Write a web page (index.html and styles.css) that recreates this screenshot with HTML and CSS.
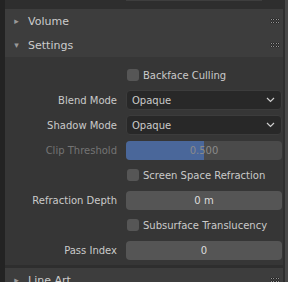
FILE: index.html
```html
<!DOCTYPE html>
<html lang="en">
<head>
  <meta charset="UTF-8" />
  <title>Material Settings</title>
  <link rel="stylesheet" href="styles.css">
</head>
<body>
  <div class="editor">
    <div class="gutter"></div>

    <div class="main">
      <div class="prev"><div class="prev-box"></div></div>

      <section class="panel">
        <div class="panel-header">
          <span class="arrow">&#9656;</span>
          <span class="title">Volume</span>
          <span class="grip"></span>
        </div>
      </section>

      <section class="panel">
        <div class="panel-header">
          <span class="arrow">&#9662;</span>
          <span class="title">Settings</span>
          <span class="grip"></span>
        </div>
        <div class="panel-body">
          <div class="row">
            <span class="label"></span>
            <label class="check"><span class="box"></span>Backface Culling</label>
          </div>
          <div class="row">
            <span class="label">Blend Mode</span>
            <div class="menu">
              <span>Opaque</span>
              <svg width="9" height="6" viewBox="0 0 9 6"><path d="M1 1 L4.5 4.5 L8 1" fill="none" stroke="#cfcfcf" stroke-width="1.2"/></svg>
            </div>
          </div>
          <div class="row">
            <span class="label">Shadow Mode</span>
            <div class="menu">
              <span>Opaque</span>
              <svg width="9" height="6" viewBox="0 0 9 6"><path d="M1 1 L4.5 4.5 L8 1" fill="none" stroke="#cfcfcf" stroke-width="1.2"/></svg>
            </div>
          </div>
          <div class="row disabled">
            <span class="label">Clip Threshold</span>
            <div class="slider">
              <div class="fill" style="width: 50%"></div>
              <span class="value">0.500</span>
            </div>
          </div>
          <div class="row">
            <span class="label"></span>
            <label class="check"><span class="box"></span>Screen Space Refraction</label>
          </div>
          <div class="row">
            <span class="label">Refraction Depth</span>
            <div class="number">0 m</div>
          </div>
          <div class="row">
            <span class="label"></span>
            <label class="check"><span class="box"></span>Subsurface Translucency</label>
          </div>
          <div class="row">
            <span class="label">Pass Index</span>
            <div class="number">0</div>
          </div>
        </div>
      </section>

      <section class="panel">
        <div class="panel-header">
          <span class="arrow">&#9656;</span>
          <span class="title">Line Art</span>
          <span class="grip"></span>
        </div>
      </section>
    </div>

    <div class="scrollbar"></div>
  </div>
</body>
</html>
```

FILE: styles.css
```css
body {
  margin: 0;
  background-color: #2e2e2e;
  font-family: "DejaVu Sans", sans-serif;
  font-size: 10px;
  color: #cacaca;
  overflow: hidden;
}

.editor {
  display: flex;
  width: 288px;
  height: 282px;
  overflow: hidden;
}

.gutter {
  width: 5px;
  background-color: #232323;
  flex-shrink: 0;
}

.main {
  flex: 1;
  display: flex;
  flex-direction: column;
}

.scrollbar {
  width: 3px;
  margin-left: 2px;
  background-color: #484848;
  flex-shrink: 0;
}

.prev {
  height: 9px;
  flex-shrink: 0;
}

.prev-box {
  margin-left: 121px;
  width: 136px;
  height: 1px;
  background-color: #3e3e3e;
}

.panel {
  background-color: #363636;
  flex-shrink: 0;
}

.panel:last-child {
  margin-top: 3px;
}

.panel-header {
  display: flex;
  align-items: center;
  height: 24px;
  background-color: #3d3d3d;
  font-size: 11px;
  color: #cccccc;
}

.arrow {
  width: 23px;
  text-align: center;
  font-size: 9px;
  color: #999;
}

.title {
  flex: 1;
  padding-left: 0;
}

.grip {
  width: 10px;
  height: 6px;
  margin-right: 3px;
  background-image: radial-gradient(circle, #c8c8c8 0.6px, #111 0.7px, transparent 1.2px);
  background-size: 2.5px 3px;
}

.panel-body {
  padding: 8px 1px 5px 0;
  display: flex;
  flex-direction: column;
  gap: 5px;
}

.row {
  display: grid;
  grid-template-columns: 112px 1fr;
  column-gap: 9px;
  align-items: center;
  height: 20px;
}

.label {
  text-align: right;
  white-space: nowrap;
}

.disabled .label {
  color: #747474;
}

.check {
  display: flex;
  align-items: center;
  gap: 4px;
  white-space: nowrap;
}

.box {
  width: 12px;
  height: 12px;
  margin-left: 1px;
  border-radius: 3px;
  background-color: #565656;
}

.menu {
  height: 18px;
  display: flex;
  align-items: center;
  justify-content: space-between;
  padding: 0 6px 0 5px;
  background-color: #282828;
  border: 1px solid #3c3c3c;
  border-radius: 4px;
}

.slider {
  position: relative;
  height: 19px;
  border-radius: 4px;
  background-color: #4a4a4a;
  overflow: hidden;
}

.slider .fill {
  height: 100%;
  background-color: #4a679a;
}

.slider .value {
  position: absolute;
  top: 0;
  left: 0;
  right: 0;
  line-height: 19px;
  text-align: center;
  color: #8a8a8a;
}

.number {
  height: 19px;
  line-height: 19px;
  text-align: center;
  border-radius: 4px;
  background-color: #555555;
  color: #dddddd;
}
```
